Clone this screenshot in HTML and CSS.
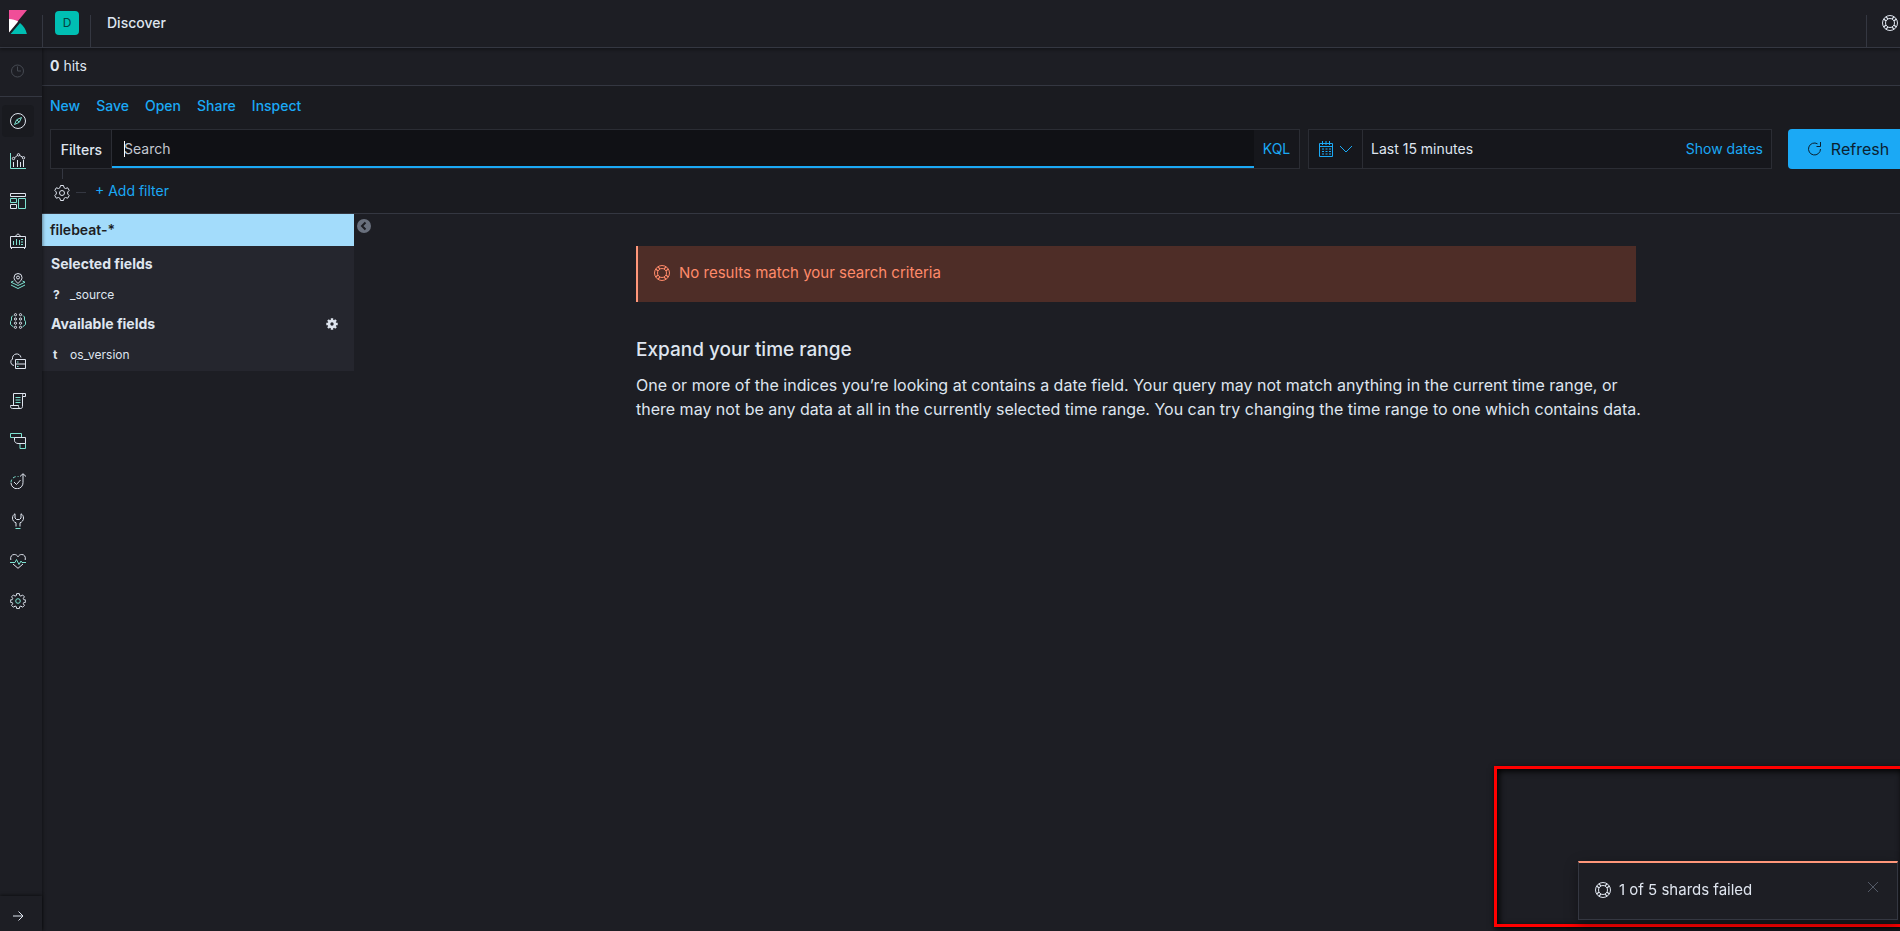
FILE: index.html
```html
<!DOCTYPE html>
<html lang="en">
<head>
    <meta charset="UTF-8">
    <meta name="viewport" content="width=device-width, initial-scale=1.0">
    <title>Discover - Kibana</title>
    <link rel="stylesheet" href="styles.css">
</head>
<body>
    <!-- shared icon -->
    <svg class="icon-defs" aria-hidden="true">
        <symbol id="help" viewBox="0 0 16 16">
            <g fill="none" stroke="currentColor">
                <circle cx="8" cy="8" r="7.500" />
                <circle cx="8" cy="8" r="4.500" />
                <path stroke-width="1.200" d="M4 1.600l2 2.600M1.600 4l2.600 2M12 1.600l-2 2.600M14.400 4l-2.600 2M4 14.400l2-2.600M1.600 12l2.600-2M12 14.400l-2-2.600M14.400 12l-2.600-2" />
            </g>
        </symbol>
    </svg>

    <header class="header">
        <a class="logo" href="#" aria-label="Kibana">
            <svg width="20" height="24" viewBox="0 0 20 24">
                <path fill="#f04e98" d="M1 0h18L1 22z" />
                <path fill="#fff" d="M1 9c3.400 0 6.500 1 9.200 2.600L1 22.500z" />
                <path fill="#00bfb3" d="M12 13c3.400 2.600 5.900 6.500 6.900 11H2.600z" />
            </svg>
        </a>
        <div class="header-section space">
            <button class="space-badge" type="button">D</button>
        </div>
        <div class="header-section breadcrumb">Discover</div>
        <div class="header-section header-help">
            <button class="icon-button" type="button" aria-label="Help"><svg class="icon"><use href="#help" /></svg></button>
        </div>
    </header>

    <div class="page">
        <nav class="side-nav">
            <div class="nav-recent">
                <a href="#" aria-label="Recently viewed"><svg class="icon" viewBox="0 0 16 16"><circle cx="7.500" cy="8" r="6" /><path d="M7.500 3.500V8H11" /></svg></a>
            </div>
            <div class="nav-list">
                <a class="active" href="#" aria-label="Discover"><svg class="icon" viewBox="0 0 16 16"><circle cx="8" cy="8" r="7.500" /><path class="accent" d="M11.500 4.500L9.300 9.300 4.500 11.500 6.700 6.700zM7 7l2 2" /></svg></a>
                <a href="#" aria-label="Visualize"><svg class="icon" viewBox="0 0 16 16"><path class="accent" d="M.5 0v15.500H16" /><path d="M3.500 9v5M7.500 7v7M10.500 9v5M13.500 7v7M4.300 5L7.500 2.300M9.500 2.300l3.200 2" /><circle cx="3.500" cy="5.500" r="1.200" /><circle cx="8.500" cy="1.800" r="1.200" /><circle cx="13.500" cy="4.800" r="1.200" /></svg></a>
                <a href="#" aria-label="Dashboard"><svg class="icon" viewBox="0 0 16 16"><path d="M.5.5h15v3H.5zM.5 11.500h6v4h-6z" /><path class="accent" d="M.5 5.500h6v4h-6zM8.500 5.500h7v10h-7z" /></svg></a>
                <a href="#" aria-label="Canvas"><svg class="icon" viewBox="0 0 16 16"><path d="M5 3.500L8 .8l3 2.700M.5 3.500h15v11H.5zM1.500 14.500V16M14.500 14.500V16" /><path class="accent" d="M3.500 8v4M6.500 6v6M9.500 7v5M11 6.500h2M11 9h2M11 11.500h2" /></svg></a>
                <a href="#" aria-label="Maps"><svg class="icon" viewBox="0 0 16 16"><path d="M8 10.500C5.500 8 4 6.500 4 4.500a4 4 0 0 1 8 0c0 2-1.500 3.500-4 6z" /><circle cx="8" cy="4.500" r="1.500" /><path class="accent" d="M3.500 8L1 9.200l7 3.300 7-3.300L12.500 8M1 12l7 3.500 7-3.500" /></svg></a>
                <a href="#" aria-label="Machine Learning"><svg class="icon" viewBox="0 0 16 16"><circle cx="5.500" cy="1.700" r="1.100" /><circle cx="10.500" cy="1.700" r="1.100" /><circle cx="5.500" cy="6" r="1.100" /><circle cx="10.500" cy="6" r="1.100" /><circle cx="5.500" cy="10.200" r="1.100" /><circle cx="10.500" cy="14.300" r="1.100" /><circle cx="10.500" cy="10.200" r="1.100" /><circle cx="5.500" cy="14.300" r="1.100" /><path class="accent" d="M3 2.500L1.500 4v3L.5 8.500v3L3.500 14M13 2.500L14.500 4v3l1 1.500v3l-3 2.500" /></svg></a>
                <a href="#" aria-label="Infrastructure"><svg class="icon" viewBox="0 0 16 16"><path d="M4 12.500A3.500 3.500 0 0 1 2.500 6a4.300 4.300 0 0 1 8.500-1.500M5.500 6.500h10v9h-10zM5.500 11h10" /><path class="accent" d="M7 9h1.500M7 13.500h1.500" /></svg></a>
                <a href="#" aria-label="Logs"><svg class="icon" viewBox="0 0 16 16"><path d="M3.500 12.500V.5h12v3h-3v10c0 1.200-.8 2-2 2H2.500c-1.200 0-2-.8-2-2v-1h8v1c0 1.200.8 2 2 2M12.500 3.500v-1c0-1.200.5-2 1.500-2" /><path class="accent" d="M5.500 4.500h5M5.500 7h5M5.500 9.500h5" /></svg></a>
                <a href="#" aria-label="APM"><svg class="icon" viewBox="0 0 16 16"><path class="accent" d="M4.500 4.500h-4v-4h11v4M10 10.500v5h5.500v-5" /><path d="M4.500 4.500h11v6H8c-2 0-3.500-1.500-3.500-3z" /></svg></a>
                <a href="#" aria-label="Uptime"><svg class="icon" viewBox="0 0 16 16"><path d="M1 10a6 6 0 0 0 12-.5V1M10 3.500L13 .7l3 2.800M4 9l2.500 2.500L10.500 7" /><path class="accent" stroke-dasharray="3 2" d="M1 9.500c0-3.300 2.700-6 6-6h1.500" /></svg></a>
                <a href="#" aria-label="Dev Tools"><svg class="icon" viewBox="0 0 16 16"><path d="M6 13.500V9.800C3.800 9 2.500 7.300 2.500 5c0-1.900 1-3.400 2.500-4.200V5l1.500 1.500h3L11 5V.8c1.500.8 2.500 2.300 2.500 4.200 0 2.300-1.300 4-3.500 4.800v3.700" /><path class="accent" d="M5.500 15.500h5" /></svg></a>
                <a href="#" aria-label="Monitoring"><svg class="icon" viewBox="0 0 16 16"><path d="M.8 7C0 3.500 1.800 1.500 4.200 1.500c1.800 0 3 .8 3.800 2.300.8-1.500 2-2.300 3.800-2.300C14.200 1.500 16 3.500 15.200 7M3 11l5 4.300 5-4.300" /><path class="accent" d="M0 9.500h5l1.500-3 2.500 5 2-3.500 1 1.500h4" /></svg></a>
                <a href="#" aria-label="Management"><svg class="icon" viewBox="0 0 16 16"><path d="M6.700.6h2.600l.4 2 1.200.5L12.600 2l1.800 1.800-1.100 1.700.5 1.200 2 .4v2l-2 .4-.5 1.200 1.100 1.700-1.800 1.800-1.700-1.100-1.200.5-.4 2H6.700l-.4-2-1.200-.5-1.700 1.100-1.800-1.800 1.100-1.700-.5-1.200-2-.4v-2l2-.4.5-1.200L1.600 3.800 3.400 2l1.700 1.100 1.200-.5z" /><circle class="accent" cx="8" cy="8" r="2.300" /></svg></a>
            </div>
            <button class="nav-expand" type="button" aria-label="Expand side navigation"><svg class="icon" viewBox="0 0 16 16"><path d="M3 8h10M8.500 3.500L13 8l-4.500 4.500" /></svg></button>
        </nav>

        <main class="content">
            <div class="hits"><strong>0</strong> hits</div>

            <section class="query-area">
                <div class="top-menu">
                    <a href="#">New</a>
                    <a href="#">Save</a>
                    <a href="#">Open</a>
                    <a href="#">Share</a>
                    <a href="#">Inspect</a>
                </div>
                <div class="query-row">
                    <div class="search-group">
                        <button class="filters-button" type="button">Filters</button>
                        <div class="search-box">
                            <input type="text" aria-label="Search" placeholder="Search">
                            <span class="caret"></span>
                        </div>
                        <button class="kql-button" type="button">KQL</button>
                    </div>
                    <div class="date-picker">
                        <button class="quick-select" type="button" aria-label="Quick select">
                            <svg class="icon" viewBox="0 0 16 16"><path d="M1.500 2.500h13v13h-13zM1.500 5.500h13M4.500 0v4M8 0v4M11.500 0v4" /><path stroke-dasharray="2 1.500" d="M4 8h9M4 10.500h9M4 13h9" /></svg>
                            <svg class="icon" viewBox="0 0 16 16"><path d="M2 5l6 6 6-6" /></svg>
                        </button>
                        <span class="range">Last 15 minutes</span>
                        <button class="show-dates" type="button">Show dates</button>
                    </div>
                    <button class="refresh" type="button">
                        <svg class="icon" viewBox="0 0 16 16"><path d="M10.500 2.800A6 6 0 1 0 13.500 8M13.500 1v4.500H9.500" /></svg>
                        Refresh
                    </button>
                </div>
                <div class="filter-row">
                    <button class="icon-button filter-options" type="button" aria-label="Filter options"><svg class="icon" viewBox="0 0 16 16"><path d="M6.500.5h3L10 2.600l1.500.9 2.200-.7 1.500 2.600L13.700 7v2l1.500 1.600-1.500 2.600-2.200-.7-1.500.9-.5 2.100h-3L6 13.400l-1.500-.9-2.200.7-1.500-2.600L2.300 9V7L.8 5.400l1.500-2.600 2.200.7L6 2.600z" /><circle cx="8" cy="8" r="2.500" /></svg></button>
                    <span class="dash"></span>
                    <a href="#">+ Add filter</a>
                </div>
            </section>

            <div class="discover">
                <aside class="fields">
                    <div class="index-pattern">filebeat-*</div>
                    <div class="field-list">
                        <h3>Selected fields</h3>
                        <div class="field"><b>?</b><span>_source</span></div>
                        <h3>Available fields
                            <button class="icon-button" type="button" aria-label="Field settings"><svg class="cog" viewBox="0 0 12 12"><circle cx="6" cy="6" r="3" stroke-width="2.600" /><path stroke-width="2.400" d="M6 .3v2M6 9.700v2M.3 6h2M9.700 6h2M2 2l1.300 1.300M8.700 8.700L10 10M10 2L8.700 3.300M3.300 8.700L2 10" /></svg></button>
                        </h3>
                        <div class="field"><b>t</b><span>os_version</span></div>
                    </div>
                </aside>
                <button class="icon-button collapse" type="button" aria-label="Collapse fields"><svg viewBox="0 0 14 14"><circle cx="7" cy="7" r="7" /><path d="M8.500 3.500L5 7l3.500 3.500" /></svg></button>
                <section class="results">
                    <div class="no-results">
                        <div class="callout"><svg class="icon"><use href="#help" /></svg>No results match your search criteria</div>
                        <h2>Expand your time range</h2>
                        <p>One or more of the indices you’re looking at contains a date field. Your query may not match anything in the current time range, or there may not be any data at all in the currently selected time range. You can try changing the time range to one which contains data.</p>
                    </div>
                </section>
            </div>
        </main>
    </div>

    <div class="highlight"></div>
    <div class="toast" role="status">
        <svg class="icon"><use href="#help" /></svg>
        <span>1 of 5 shards failed</span>
        <button class="icon-button" type="button" aria-label="Dismiss"><svg class="icon" viewBox="0 0 16 16"><path d="M3 3l10 10M13 3L3 13" /></svg></button>
    </div>
</body>
</html>
```

FILE: styles.css
```css
* {
    box-sizing: border-box;
}

body {
    margin: 0;
    height: 100vh;
    display: flex;
    flex-direction: column;
    overflow: hidden;
    background: #1d1e24;
    color: #dfe5ef;
    font-family: Inter, "Noto Sans", sans-serif;
    font-size: 14px;
    line-height: 20px;
}

a {
    color: #1ba9f5;
    text-decoration: none;
}

button {
    font: inherit;
    color: inherit;
    background: none;
    border: none;
    padding: 0;
    cursor: pointer;
}

.icon-defs {
    position: absolute;
    width: 0;
    height: 0;
}

.icon {
    width: 16px;
    height: 16px;
    display: block;
    flex: none;
    fill: none;
    stroke: currentColor;
}

.icon .accent {
    stroke: #7de2d1;
}

.icon-button {
    display: flex;
}

/* Header */
.header {
    display: flex;
    flex: none;
    height: 48px;
    border-bottom: 1px solid #343741;
    box-shadow: 0 2px 3px rgba(0, 0, 0, 0.3);
    z-index: 2;
}

.logo {
    width: 42px;
    padding: 10px 8px;
}

.header-section {
    margin-top: 15px;
    border-left: 1px solid #343741;
}

.space {
    width: 48px;
    padding-left: 12px;
}

.space-badge {
    width: 24px;
    height: 24px;
    margin-top: -4px;
    display: block;
    border-radius: 4px;
    background: #00bfb3;
    color: #06413d;
    font-size: 12px;
    line-height: 22px;
}

.breadcrumb {
    padding-left: 16px;
    line-height: 16px;
    font-weight: 500;
}

.header-help {
    margin-left: auto;
    padding: 0 2px 0 15px;
}

/* Side navigation */
.page {
    display: flex;
    flex: 1;
    min-height: 0;
}

.side-nav {
    width: 42px;
    flex: none;
    display: flex;
    flex-direction: column;
    box-shadow: 1px 0 3px rgba(0, 0, 0, 0.4);
    z-index: 1;
}

.side-nav a {
    width: 32px;
    height: 32px;
    margin-left: 2px;
    display: flex;
    align-items: center;
    justify-content: center;
    border-radius: 4px;
    color: #dfe5ef;
}

.nav-recent {
    padding: 7px 0 9px;
    border-bottom: 1px solid #343741;
}

.side-nav .nav-recent a {
    color: #464a52;
}

.nav-list {
    padding-top: 8px;
    display: flex;
    flex-direction: column;
    gap: 8px;
}

.side-nav a.active {
    background: #191a1f;
}

.nav-expand {
    height: 35px;
    margin-top: auto;
    padding: 4px 0 0 10px;
    box-shadow: 0 -1px 3px rgba(0, 0, 0, 0.5);
}

/* Query bar */
.content {
    flex: 1;
    min-width: 0;
}

.hits {
    height: 38px;
    padding: 8px;
    border-bottom: 1px solid #343741;
}

.query-area {
    height: 128px;
    padding-left: 8px;
    border-bottom: 1px solid #343741;
    background: #1a1b20;
}

.top-menu {
    display: flex;
    gap: 16px;
    padding: 10px 0 13px;
    font-weight: 500;
}

.query-row {
    display: flex;
    gap: 8px;
    height: 40px;
    margin-right: -8px;
}

.search-group {
    flex: 1;
    display: flex;
    border: 1px solid #2b2d34;
    background: #16171c;
}

.filters-button {
    width: 61px;
    padding: 2px 0 0 1px;
    border-right: 1px solid #2b2d34;
    font-weight: 500;
}

.search-box {
    flex: 1;
    position: relative;
}

.search-box input {
    width: 100%;
    height: 100%;
    padding: 0 12px;
    border: none;
    border-bottom: 2px solid #1ba9f5;
    outline: none;
    background: #101115;
    color: #dfe5ef;
    font: inherit;
}

.search-box input::placeholder {
    color: #c3c8d1;
    opacity: 1;
}

.caret {
    position: absolute;
    left: 12px;
    top: 11px;
    width: 1px;
    height: 16px;
    background: #fff;
}

.kql-button {
    width: 45px;
    color: #1ba9f5;
}

.date-picker {
    width: 464px;
    margin-right: 8px;
    display: flex;
    align-items: center;
    border: 1px solid #2b2d34;
    background: #16171c;
}

.quick-select {
    width: 54px;
    height: 100%;
    display: flex;
    align-items: center;
    gap: 4px;
    padding-left: 9px;
    border-right: 1px solid #2b2d34;
    color: #1ba9f5;
}

.range {
    flex: 1;
    padding-left: 8px;
}

.show-dates {
    padding-right: 8px;
    color: #1ba9f5;
}

.refresh {
    width: 120px;
    display: flex;
    align-items: center;
    justify-content: center;
    gap: 8px;
    border-radius: 4px;
    background: #1ba9f5;
    color: #0b2130;
    font-size: 16px;
}

.filter-row {
    display: flex;
    align-items: flex-start;
    padding-left: 4px;
}

.filter-row a {
    margin-top: 12px;
    padding-left: 9px;
}

.filter-options {
    flex-direction: column;
    align-items: center;
    gap: 6px;
}

.filter-options::before {
    content: "";
    width: 1px;
    height: 10px;
    background: #343741;
}

.dash {
    width: 10px;
    height: 1px;
    margin: 23px 0 0 6px;
    background: #343741;
}

/* Fields */
.discover {
    display: flex;
    align-items: flex-start;
}

.fields {
    width: 312px;
    background: #25262e;
}

.index-pattern {
    padding: 6px 8px;
    background: #a3dcfb;
    color: #1d1e24;
    font-weight: 600;
}

.field-list {
    padding: 4px 16px 1px 9px;
}

.field-list h3 {
    margin: 0;
    display: flex;
    align-items: center;
    justify-content: space-between;
    font-size: 14px;
    font-weight: 700;
    line-height: 28px;
}

.cog {
    width: 12px;
    height: 12px;
    fill: none;
    stroke: currentColor;
}

.field {
    display: flex;
    padding-top: 2px;
    font-size: 12px;
    line-height: 30px;
}

.field b {
    width: 19px;
    padding-left: 2px;
}

.collapse {
    margin: 5px 1px 0 3px;
}

.collapse svg {
    width: 14px;
    height: 14px;
    fill: #69707d;
}

.collapse path {
    fill: none;
    stroke: #1d1e24;
    stroke-width: 2;
}

/* Results */
.results {
    flex: 1;
    padding: 32px 16px;
}

.no-results {
    max-width: 1000px;
    margin: 0 auto;
}

.callout {
    display: flex;
    align-items: center;
    gap: 9px;
    height: 56px;
    padding: 0 16px 2px;
    border-left: 2px solid #ff977a;
    background: #4e2d27;
    color: #ff8a6a;
    font-size: 15px;
}

.no-results h2 {
    margin: 32px 0 7px;
    font-size: 19px;
    font-weight: 500;
    line-height: 32px;
}

.no-results p {
    margin: 0 -16px 0 0;
    font-size: 16px;
    line-height: 24px;
}

/* Toast */
.highlight {
    position: fixed;
    right: -3px;
    bottom: 4px;
    width: 409px;
    height: 161px;
    border: 3px solid #f00;
    box-shadow: 1px 2px 6px #000, inset 2px 2px 6px #000;
}

.toast {
    position: fixed;
    right: 2px;
    bottom: 11px;
    width: 320px;
    height: 59px;
    display: flex;
    align-items: center;
    gap: 8px;
    padding: 0 16px 2px;
    border: 1px solid #343741;
    border-top: 2px solid #ff977a;
    background: #1d1e24;
    box-shadow: 0 4px 12px rgba(0, 0, 0, 0.4);
    font-size: 15px;
}

.toast .icon-button {
    margin: -6px 0 0 auto;
    color: #535966;
}
```
